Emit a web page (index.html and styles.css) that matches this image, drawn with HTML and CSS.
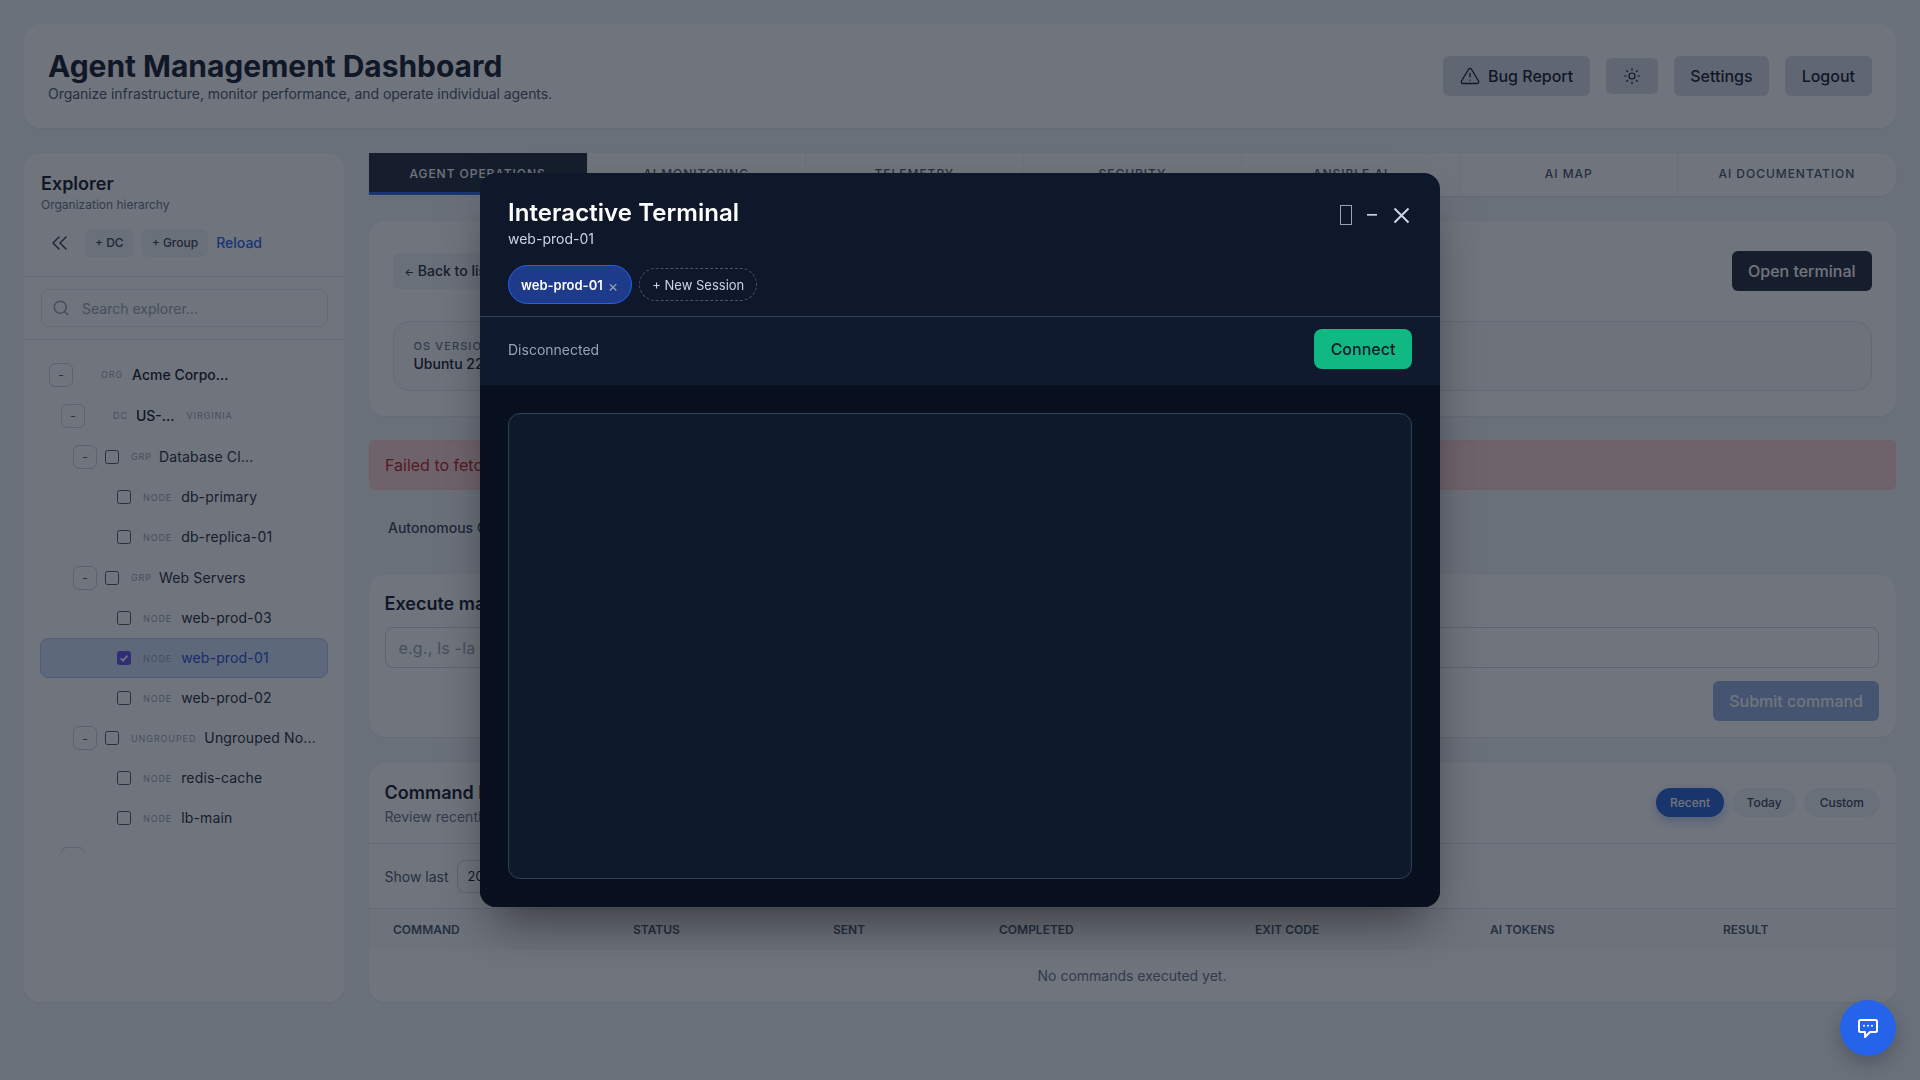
FILE: index.html
```html
<!DOCTYPE html>
<html lang="en">
<head>
<meta charset="utf-8">
<title>Agent Management Dashboard</title>
<link rel="stylesheet" href="styles.css">
</head>
<body>
<div class="app">
  <header class="top card">
    <div>
      <h1>Agent Management Dashboard</h1>
      <p class="top-sub">Organize infrastructure, monitor performance, and operate individual agents.</p>
    </div>
    <div class="top-actions">
      <button class="btn-grey">
        <svg class="ic20" viewBox="0 0 24 24"><path d="M10.3 3.9 1.8 18a2 2 0 0 0 1.7 3h17a2 2 0 0 0 1.7-3L13.7 3.9a2 2 0 0 0-3.4 0z"/><path d="M12 9v4"/><path d="M12 17h.01"/></svg>
        Bug Report
      </button>
      <button class="btn-theme" aria-label="Theme">
        <svg class="ic18" viewBox="0 0 24 24"><circle cx="12" cy="12" r="4"/><path d="M12 2v2M12 20v2M4.9 4.9l1.4 1.4M17.7 17.7l1.4 1.4M2 12h2M20 12h2M6.3 17.7l-1.4 1.4M19.1 4.9l-1.4 1.4"/></svg>
      </button>
      <button class="btn-grey">Settings</button>
      <button class="btn-grey">Logout</button>
    </div>
  </header>

  <div class="layout">
    <aside class="side card">
      <div class="side-head">
        <h2>Explorer</h2>
        <p class="side-sub">Organization hierarchy</p>
        <div class="side-tools">
          <button class="collapse" aria-label="Collapse">
            <svg viewBox="0 0 16 14"><path d="M8 1 2 7l6 6"/><path d="M15 1 9 7l6 6"/></svg>
          </button>
          <button class="tool">+ DC</button>
          <button class="tool">+ Group</button>
          <button class="reload">Reload</button>
        </div>
      </div>
      <div class="side-search">
        <div class="search">
          <svg viewBox="0 0 24 24"><circle cx="11" cy="11" r="8"/><path d="m21 21-4.3-4.3"/></svg>
          <span>Search explorer...</span>
        </div>
      </div>
      <div class="tree">
        <div class="row d0 tall"><span class="tg">-</span><span class="sp"></span><span class="tag wide">ORG</span><span class="nm strong">Acme Corpo...</span></div>
        <div class="row d1 tall"><span class="tg">-</span><span class="sp"></span><span class="tag">DC</span><span class="nm strong">US-...</span><span class="tag extra">VIRGINIA</span></div>
        <div class="row d2 tall"><span class="tg">-</span><span class="cb"></span><span class="tag narrow">GRP</span><span class="nm">Database Cl...</span></div>
        <div class="row d3"><span class="cb"></span><span class="tag wide">NODE</span><span class="nm">db-primary</span></div>
        <div class="row d3"><span class="cb"></span><span class="tag wide">NODE</span><span class="nm">db-replica-01</span></div>
        <div class="row d2 tall"><span class="tg">-</span><span class="cb"></span><span class="tag narrow">GRP</span><span class="nm">Web Servers</span></div>
        <div class="row d3"><span class="cb"></span><span class="tag wide">NODE</span><span class="nm">web-prod-03</span></div>
        <div class="row d3 sel"><span class="cb on"><svg viewBox="0 0 14 14"><path d="m3 7.3 2.8 2.8L11 4.2"/></svg></span><span class="tag wide">NODE</span><span class="nm">web-prod-01</span></div>
        <div class="row d3"><span class="cb"></span><span class="tag wide">NODE</span><span class="nm">web-prod-02</span></div>
        <div class="row d2"><span class="tg">-</span><span class="cb"></span><span class="tag">UNGROUPED</span><span class="nm">Ungrouped No...</span></div>
        <div class="row d3"><span class="cb"></span><span class="tag wide">NODE</span><span class="nm">redis-cache</span></div>
        <div class="row d3"><span class="cb"></span><span class="tag wide">NODE</span><span class="nm">lb-main</span></div>
        <div class="row d1 tall"><span class="tg"></span></div>
      </div>
    </aside>

    <main class="main">
      <nav class="tabs">
        <div class="tab active">Agent Operations</div>
        <div class="tab">AI Monitoring</div>
        <div class="tab">Telemetry</div>
        <div class="tab">Security</div>
        <div class="tab">Ansible AI</div>
        <div class="tab">AI Map</div>
        <div class="tab">AI Documentation</div>
      </nav>

      <section class="card agent">
        <div class="agent-head">
          <button class="back"><span class="arrow">←</span> Back to list</button>
          <button class="open">Open terminal</button>
        </div>
        <div class="info">
          <div class="info-label">OS Version</div>
          <div class="info-value">Ubuntu 22.04 LTS</div>
        </div>
      </section>

      <div class="alert">Failed to fetch agent details</div>
      <div class="auto">Autonomous Command Execution</div>

      <section class="card exec">
        <h3>Execute manual command</h3>
        <div class="exec-input">e.g., ls -la</div>
        <div class="exec-foot"><button class="submit">Submit command</button></div>
      </section>

      <section class="card history">
        <div class="hist-head">
          <div>
            <h3>Command history</h3>
            <p class="hist-sub">Review recently executed commands</p>
          </div>
          <div class="pills">
            <span class="pill on">Recent</span>
            <span class="pill mid">Today</span>
            <span class="pill">Custom</span>
          </div>
        </div>
        <div class="hist-filter"><span>Show last</span><span class="select">20</span></div>
        <div class="thead">
          <span>Command</span><span>Status</span><span>Sent</span><span>Completed</span><span>Exit code</span><span>AI tokens</span><span>Result</span>
        </div>
        <div class="empty">No commands executed yet.</div>
      </section>
    </main>
  </div>
</div>

<div class="overlay">
  <div class="modal">
    <div class="m-head">
      <div class="m-top">
        <div>
          <div class="m-title">Interactive Terminal</div>
          <div class="m-sub">web-prod-01</div>
        </div>
        <div class="m-ctl">
          <span class="ctl-max"></span>
          <span class="ctl-min">–</span>
          <svg class="ctl-close" viewBox="0 0 18 18"><path d="M1.5 2.5 15.5 16.5M15.5 2.5 1.5 16.5"/></svg>
        </div>
      </div>
      <div class="m-tabs">
        <span class="m-tab">web-prod-01 <span class="m-x">×</span></span>
        <span class="m-new">+ New Session</span>
      </div>
    </div>
    <div class="m-status">
      <span>Disconnected</span>
      <button class="connect">Connect</button>
    </div>
    <div class="m-body"><div class="term"></div></div>
  </div>
</div>

<button class="fab" aria-label="Chat">
  <svg viewBox="0 0 24 24"><path d="M4.5 4h15A1.5 1.5 0 0 1 21 5.500v9a1.500 1.500 0 0 1-1.500 1.500H14l-5 5v-5H4.500A1.500 1.500 0 0 1 3 14.500v-9A1.500 1.500 0 0 1 4.500 4z"/><path d="M8 9.700h.01M12 9.700h.01M16 9.700h.01"/></svg>
</button>
</body>
</html>
```
FILE: styles.css
```css
* { box-sizing: border-box; }
html, body { margin: 0; height: 100%; }
body {
  background: #f1f5f9;
  color: #0f172a;
  font-family: Inter, "Noto Sans", sans-serif;
  font-size: 14px;
  overflow: hidden;
}
button { font-family: inherit; border: 0; cursor: pointer; padding: 0; }
h1, h2, h3, p { margin: 0; }

.app { padding: 24px 24.5px 24px 24px; }
.card { background: #fff; border-radius: 16px; box-shadow: 0 1px 2px rgba(15,23,42,.06); }

/* header */
.top { height: 104px; padding: 0 24px; display: flex; align-items: center; justify-content: space-between; }
h1 { font-size: 30px; line-height: 36px; font-weight: 700; letter-spacing: -.05px; }
.top-sub { font-size: 14px; line-height: 20px; color: #475569; letter-spacing: -.05px; }
.top-actions { display: flex; align-items: center; gap: 16px; }
.btn-grey { height: 40px; padding: 0 16.5px; border-radius: 6px; background: #d9dee6; color: #0f172a; font-size: 16px; font-weight: 500; display: flex; align-items: center; gap: 8px; }
.btn-theme { width: 52px; height: 36px; border-radius: 6px; background: #d9dee6; display: flex; align-items: center; justify-content: center; }
.ic20, .ic18 { width: 20px; height: 20px; fill: none; stroke: #0f172a; stroke-width: 1.6; stroke-linecap: round; stroke-linejoin: round; }
.ic18 { width: 18px; height: 18px; }

/* layout */
.layout { display: flex; gap: 25px; margin-top: 25px; height: 849px; }
.side { width: 319.5px; flex: none; display: flex; flex-direction: column; }
.main { flex: 1; min-width: 0; display: flex; flex-direction: column; }

/* sidebar */
.side-head { padding: 21px 17px 0; height: 124px; border-bottom: 1px solid #e2e8f0; }
h2 { font-size: 18px; line-height: 20px; font-weight: 600; }
.side-sub { font-size: 12px; line-height: 16px; color: #64748b; margin-top: 3px; }
.side-tools { display: flex; align-items: center; margin-top: 15.5px; gap: 8px; }
.collapse { width: 36px; height: 28px; background: none; display: flex; align-items: center; justify-content: center; }
.collapse svg { width: 16px; height: 14px; fill: none; stroke: #334155; stroke-width: 1.5; stroke-linecap: round; stroke-linejoin: round; }
.tool { height: 28px; padding: 0 10px; border-radius: 6px; background: #f1f5f9; color: #334155; font-size: 12px; font-weight: 500; }
.reload { background: none; color: #2563eb; font-size: 14px; font-weight: 500; }
.side-search { height: 63px; padding: 12px 16px 0 17px; border-bottom: 1px solid #e2e8f0; }
.search { height: 38px; border: 1px solid #e2e8f0; border-radius: 8px; display: flex; align-items: center; gap: 12px; padding-left: 10px; color: #94a3b8; font-size: 14px; }
.search svg { width: 18px; height: 18px; fill: none; stroke: #94a3b8; stroke-width: 2; stroke-linecap: round; }
.tree { height: 513px; padding-top: 14px; overflow: hidden; }
.row { display: flex; align-items: center; height: 40px; margin: 0 16px; border: 1px solid transparent; border-radius: 8px; }
.row.tall { height: 41px; }
.d0 { padding-left: 8px; }
.d1 { padding-left: 20px; }
.d2 { padding-left: 32px; }
.d3 { padding-left: 76px; }
.sel { background: #cfe2fb; border-color: #a8c8f5; }
.sel .nm { color: #1d4ed8; }
.tg { width: 24px; height: 24px; flex: none; border: 1px solid #cbd5e1; border-radius: 6px; display: flex; align-items: center; justify-content: center; font-size: 12px; color: #475569; margin-right: 8px; }
.sp { width: 20px; flex: none; }
.cb { width: 14px; height: 14px; flex: none; border: 1px solid #475569; border-radius: 2.5px; margin-right: 12px; background: #fff; display: flex; }
.cb.on { background: #5b50f0; border-color: #5b50f0; }
.cb svg { width: 12px; height: 12px; fill: none; stroke: #fff; stroke-width: 2; }
.tag { font-size: 9px; letter-spacing: .1em; color: #94a3b8; margin-right: 8px; flex: none; }
.tag.wide { margin-right: 9px; }
.tag.narrow { margin-right: 7px; }
.tag.extra { margin: 0 0 0 12px; }
.nm { font-size: 14px; line-height: 20px; color: #1e293b; white-space: nowrap; letter-spacing: .15px; }
.nm.strong { font-weight: 500; color: #0f172a; letter-spacing: 0; }

/* tabs */
.tabs { display: grid; grid-template-columns: repeat(7, 1fr); background: #fff; border-radius: 0 16px 16px 0; height: 43px; box-shadow: 0 1px 2px rgba(15,23,42,.08); }
.tab { display: flex; align-items: center; justify-content: center; padding-bottom: 2px; font-size: 12px; font-weight: 500; letter-spacing: .08em; text-transform: uppercase; color: #475569; border-left: 1px solid #f1f5f9; }
.tab.active { background: #1e293b; color: #fff; border-left: 0; border-bottom: 3px solid #2563eb; height: 42px; padding: 1px 0 0; }

/* agent card */
.agent { margin-top: 25px; padding: 24px; height: 195px; }
.agent-head { height: 52px; display: flex; align-items: center; justify-content: space-between; }
.back { height: 36px; padding: 0 12px 1px; border-radius: 6px; background: #f1f5f9; color: #1e293b; font-size: 14px; font-weight: 500; }
.arrow { font-size: 10px; }
.open { height: 40px; padding: 0 16px; border-radius: 6px; background: #1e293b; color: #fff; font-size: 16px; font-weight: 500; }
.info { margin-top: 24px; height: 70px; border: 1px solid #e2e8f0; border-radius: 16px; background: #f8fafc; padding: 17px 20px 0; }
.info-label { font-size: 11px; line-height: 14px; letter-spacing: .1em; text-transform: uppercase; color: #64748b; font-weight: 500; }
.info-value { font-size: 14px; line-height: 20px; color: #0f172a; font-weight: 500; margin-top: 1px; }

/* alert */
.alert { margin-top: 24px; height: 50px; display: flex; align-items: center; padding: 0 15.5px; background: #fdd5d5; border: 1px solid #fecaca; border-radius: 6px; color: #b91c1c; font-size: 16px; }
.auto { margin-top: 28px; padding-left: 19.5px; height: 20px; line-height: 20px; color: #334155; font-size: 14px; font-weight: 500; }

/* exec */
.exec { margin-top: 37px; height: 162px; padding: 16px 16.5px 16px 16px; }
h3 { font-size: 18px; line-height: 26px; font-weight: 600; }
.exec-input { margin-top: 10px; height: 41px; border: 1px solid #cbd5e1; border-radius: 8px; padding: 0 13px; display: flex; align-items: center; color: #94a3b8; font-size: 16px; letter-spacing: .2px; }
.exec-foot { display: flex; justify-content: flex-end; margin-top: 13px; }
.submit { height: 40px; padding: 0 16px; border-radius: 6px; background: #2a62c4; opacity: .5; color: #fff; font-size: 16px; font-weight: 500; }

/* history */
.history { margin-top: 26px; height: 239px; overflow: hidden; }
.hist-head { height: 81px; padding: 17px 16px 0; display: flex; justify-content: space-between; border-bottom: 1px solid #e2e8f0; }
.hist-sub { font-size: 14px; line-height: 20px; color: #64748b; margin-top: 1px; }
.pills { display: flex; gap: 8px; margin-top: 8px; }
.pill { height: 29px; padding: 0 15.500px; border-radius: 15px; background: #f1f5f9; color: #334155; font-size: 12px; font-weight: 500; display: flex; align-items: center; }
.pill.mid { padding: 0 14.500px; }
.pill.on { padding: 0 14px; background: #2563d8; color: #fff; box-shadow: 0 4px 12px rgba(37,99,235,.35); }
.hist-filter { height: 65px; padding: 0 16px; display: flex; align-items: center; gap: 8px; border-bottom: 1px solid #e2e8f0; color: #475569; font-size: 14px; }
.select { width: 110px; height: 33px; border: 1px solid #cbd5e1; border-radius: 8px; display: flex; align-items: center; padding-left: 10px; color: #0f172a; font-size: 13px; }
.thead { display: grid; grid-template-columns: 240px 200px 166px 256px 235px 233px 1fr; height: 41px; align-items: center; background: #f8fafc; font-size: 12px; font-weight: 600; text-transform: uppercase; color: #475569; }
.thead span { padding-left: 24.500px; }
.empty { text-align: center; line-height: 52px; color: #64748b; font-size: 14px; }

/* overlay + modal */
.overlay { position: fixed; inset: 0; background: rgba(17,24,36,.6); backdrop-filter: blur(.7px); display: flex; align-items: center; justify-content: center; z-index: 10; }
.modal { width: 960px; height: 734px; background: #0f172a; border-radius: 16px; overflow: hidden; box-shadow: 0 25px 50px -12px rgba(0,0,0,.5); display: flex; flex-direction: column; color: #fff; }
.m-head { height: 144px; padding: 26px 28px 0; border-bottom: 1px solid #334155; }
.m-top { display: flex; justify-content: space-between; }
.m-title { font-size: 24px; line-height: 28px; font-weight: 600; letter-spacing: .06px; }
.m-sub { font-size: 14px; line-height: 20px; color: #cbd5e1; margin-top: 2px; }
.m-ctl { display: flex; align-items: center; gap: 15px; height: 32px; color: #cbd5e1; padding-right: 1.500px; }
.ctl-max { width: 12px; height: 20px; border: 1.5px solid #94a3b8; }
.ctl-min { font-size: 20px; line-height: 20px; margin-top: -2px; margin-right: .500px; }
.ctl-close { width: 18px; height: 18px; fill: none; stroke: #cbd5e1; stroke-width: 2; }
.m-tabs { display: flex; align-items: center; gap: 7px; margin-top: 16px; }
.m-tab { height: 39px; padding: 0 13px 0 12px; border-radius: 20px; background: #1e3a8a; border: 1px solid #2563eb; font-size: 13px; font-weight: 600; display: flex; align-items: center; gap: 5px; }
.m-x { color: #94a3b8; font-weight: 400; font-size: 16px; margin-top: 3px; }
.m-new { height: 33px; padding: 0 12px; border-radius: 17px; border: 1px dashed #475569; color: #cbd5e1; font-size: 13px; display: flex; align-items: center; }
.m-status { height: 68px; padding: 0 28px 4px; display: flex; align-items: center; justify-content: space-between; color: #94a3b8; font-size: 14px; background: #0f1a2e; }
.connect { height: 40px; width: 98px; border-radius: 8px; background: #10b981; color: #0f172a; font-size: 16px; font-weight: 500; }
.m-body { flex: 1; padding: 28px; background: #080f1f; }
.term { height: 100%; background: #0f192c; border: 1px solid #334155; border-radius: 12px; }

.fab { position: fixed; right: 24px; bottom: 24px; width: 56px; height: 56px; border-radius: 50%; background: #2563eb; z-index: 20; display: flex; align-items: center; justify-content: center; box-shadow: 0 8px 16px rgba(15,23,42,.25); }
.fab svg { width: 24px; height: 24px; fill: none; stroke: #fff; stroke-width: 2; stroke-linecap: round; stroke-linejoin: round; }
```
